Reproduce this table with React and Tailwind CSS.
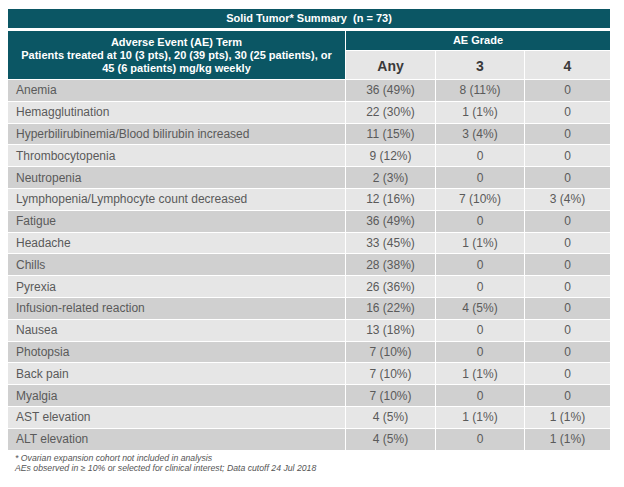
const rows = [
  ["Anemia", "36 (49%)", "8 (11%)", "0"],
  ["Hemagglutination", "22 (30%)", "1 (1%)", "0"],
  ["Hyperbilirubinemia/Blood bilirubin increased", "11 (15%)", "3 (4%)", "0"],
  ["Thrombocytopenia", "9 (12%)", "0", "0"],
  ["Neutropenia", "2 (3%)", "0", "0"],
  ["Lymphopenia/Lymphocyte count decreased", "12 (16%)", "7 (10%)", "3 (4%)"],
  ["Fatigue", "36 (49%)", "0", "0"],
  ["Headache", "33 (45%)", "1 (1%)", "0"],
  ["Chills", "28 (38%)", "0", "0"],
  ["Pyrexia", "26 (36%)", "0", "0"],
  ["Infusion-related reaction", "16 (22%)", "4 (5%)", "0"],
  ["Nausea", "13 (18%)", "0", "0"],
  ["Photopsia", "7 (10%)", "0", "0"],
  ["Back pain", "7 (10%)", "1 (1%)", "0"],
  ["Myalgia", "7 (10%)", "0", "0"],
  ["AST elevation", "4 (5%)", "1 (1%)", "1 (1%)"],
  ["ALT elevation", "4 (5%)", "0", "1 (1%)"],
];

const font = { fontFamily: '"Liberation Sans", Arial, sans-serif' };

export default function App() {
  return (
    <div className="w-[624px] h-[487px] bg-white pl-[8px] pt-[9px]" style={font}>
      <div className="w-[602px] h-[19px] bg-[#0b5664] text-white text-[11px] font-bold flex items-center justify-center whitespace-pre">
        Solid Tumor* Summary  (n = 73)
      </div>
      <div className="mt-[3px] grid grid-cols-[337px_89px_88px_85px] grid-rows-[19px_28px] gap-px">
        <div className="row-span-2 bg-[#0b5664] text-white text-[11px] font-bold leading-[13px] flex flex-col items-center justify-center text-center">
          <span>Adverse Event (AE) Term</span>
          <span>Patients treated at 10 (3 pts), 20 (39 pts), 30 (25 patients), or</span>
          <span>45 (6 patients) mg/kg weekly</span>
        </div>
        <div className="col-span-3 bg-[#0b5664] text-white text-[11px] font-bold flex items-center justify-center">
          AE Grade
        </div>
        {["Any", "3", "4"].map((h) => (
          <div key={h} className="bg-[#e6e6e6] text-[#3a3a3a] text-[14px] font-bold flex items-center justify-center pt-[3px]">
            {h}
          </div>
        ))}
      </div>
      <div className="mt-px flex flex-col gap-px">
        {rows.map((r, i) => (
          <div key={i} className="grid grid-cols-[337px_89px_88px_85px] gap-px h-[20.8px] text-[12px] text-[#5a5a5a]">
            {r.map((c, j) => (
              <div
                key={j}
                className={`flex items-center ${j === 0 ? "pl-[8px]" : "justify-center"} ${i % 2 === 0 ? "bg-[#d0d0d0]" : "bg-[#e6e6e6]"}`}
              >
                {c}
              </div>
            ))}
          </div>
        ))}
      </div>
      <div className="mt-[3px] pl-[7px] text-[8.7px] italic leading-[10px] text-[#555]">
        <div>* Ovarian expansion cohort not included in analysis</div>
        <div>AEs observed in ≥ 10% or selected for clinical interest; Data cutoff 24 Jul 2018</div>
      </div>
    </div>
  );
}
